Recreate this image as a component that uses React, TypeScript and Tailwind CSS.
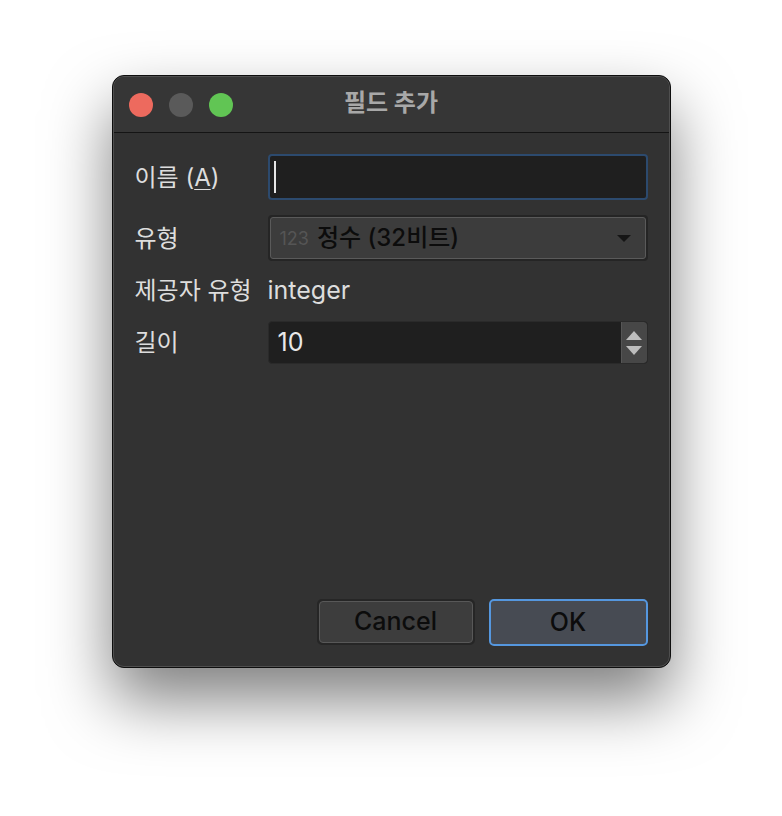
import React from "react";

const font = { fontFamily: 'Inter, "Noto Sans CJK KR", "Noto Sans", sans-serif' };

export default function App() {
  return (
    <div className="w-[782px] h-[816px] bg-white flex justify-center pt-[75px]" style={font}>
      <div className="w-[559px] h-[593px] rounded-[12px] border border-[#0e0e0e] bg-[#323232] shadow-[0_32px_64px_rgba(0,0,0,0.5)] flex flex-col overflow-hidden">
        <div className="flex-1 rounded-[11px] border border-[#4f4f4f] flex flex-col overflow-hidden">
          {/* title bar */}
          <div className="h-[56px] bg-[#363636] border-b border-[#141414] flex items-center relative shrink-0">
            <div className="flex items-center gap-[16px] pl-[15px]">
              <div className="w-[24px] h-[24px] rounded-full bg-[#ed6a5e]" />
              <div className="w-[24px] h-[24px] rounded-full bg-[#5a5a5a]" />
              <div className="w-[24px] h-[24px] rounded-full bg-[#61c554]" />
            </div>
            <div className="absolute inset-0 flex items-center justify-center pb-[4px] text-[24px] font-bold text-[#a8a8a8]">
              필드 추가
            </div>
          </div>
          {/* body */}
          <div className="flex-1 flex flex-col pl-[21px] pr-[21px] pt-[21px] pb-[20px]">
            <div className="grid grid-cols-[133px_1fr] items-center text-[24px] text-[#dddddd]">
              <div className="pt-[2px]">
                이름 (<span className="underline underline-offset-[3px] decoration-1">A</span>)
              </div>
              <div className="h-[46px] rounded-[4px] border-2 border-[#2c4a6e] bg-[#1f1f1f] flex items-center pl-[4px]">
                <div className="w-[2px] h-[32px] bg-[#e6e6e6]" />
              </div>

              <div className="mt-[15px] pt-[2px]">유형</div>
              <div className="mt-[15px] h-[46px] rounded-[4px] border-2 border-[#252525] bg-[#252525] flex">
                <div className="flex-1 rounded-[3px] border border-[#5a5a5a] bg-[#3c3c3c] flex items-center pl-[9px] pr-[14px]">
                  <span className="text-[18px] text-[#555555] mr-[8px]">123</span>
                  <span className="text-[24px] font-medium text-[#0c0c0c]">정수 (32비트)</span>
                  <span className="ml-auto w-0 h-0 border-l-[7px] border-r-[7px] border-t-[7px] border-l-transparent border-r-transparent border-t-[#151515]" />
                </div>
              </div>

              <div className="mt-[14px] h-[32px] flex items-center whitespace-nowrap">제공자 유형</div>
              <div className="mt-[14px] h-[32px] flex items-center text-[25px]">integer</div>

              <div className="mt-[14px]">길이</div>
              <div className="mt-[14px] h-[43px] rounded-[4px] bg-[#1f1f1f] border border-[#2a2a2a] flex overflow-hidden">
                <div className="flex-1 flex items-center pl-[9px] text-[25px] text-[#e8e8e8]">10</div>
                <div className="w-[26px] bg-[#474747] border-l border-[#555555] rounded-r-[3px] flex flex-col items-center justify-center gap-[6px]">
                  <span className="w-0 h-0 border-l-[8px] border-r-[8px] border-b-[9px] border-l-transparent border-r-transparent border-b-[#bdbdbd]" />
                  <span className="w-0 h-0 border-l-[8px] border-r-[8px] border-t-[9px] border-l-transparent border-r-transparent border-t-[#bdbdbd]" />
                </div>
              </div>
            </div>

            <div className="mt-auto flex justify-end gap-[14px]">
              <div className="w-[158px] h-[46px] rounded-[5px] border-2 border-[#262626] bg-[#262626] flex">
                <div className="flex-1 rounded-[4px] border border-[#585858] bg-[#3d3d3d] flex items-center justify-center text-[25px] font-medium text-[#0c0c0c]">
                  Cancel
                </div>
              </div>
              <div className="w-[159px] h-[47px] rounded-[5px] border-2 border-[#5597df] bg-[#474b53] flex items-center justify-center text-[25px] font-medium text-[#0c0c0c]">
                OK
              </div>
            </div>
          </div>
        </div>
      </div>
    </div>
  );
}
